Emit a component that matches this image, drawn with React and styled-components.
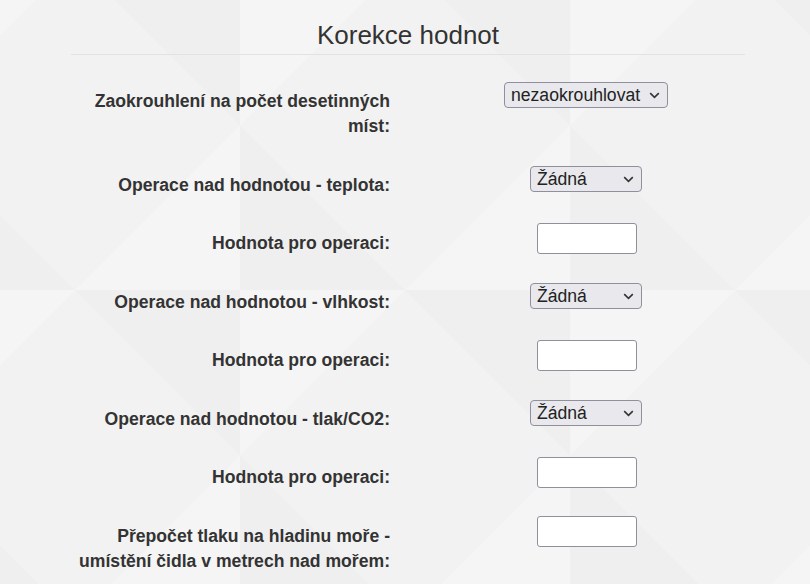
import React from 'react';
import styled, { createGlobalStyle } from 'styled-components';

const GlobalStyle = createGlobalStyle`
  html, body {
    margin: 0;
    padding: 0;
  }
  body {
    min-height: 584px;
    background-color: #f2f2f2;
    background-image:
      linear-gradient(45deg, rgba(0, 0, 0, 0.012) 25%, transparent 25%, transparent 75%, rgba(0, 0, 0, 0.012) 75%),
      linear-gradient(-45deg, rgba(255, 255, 255, 0.22) 25%, transparent 25%, transparent 75%, rgba(255, 255, 255, 0.22) 75%);
    background-size: 330px 330px;
    background-position: -90px -40px;
    font-family: "Liberation Sans", Arial, sans-serif;
    color: #333;
  }
`;

// Outer page area
const Page = styled.div`
  padding: 0 65px 0 71px;
`;

const Title = styled.h2`
  margin: 0;
  padding: 20px 0 4px;
  font-size: 26px;
  font-weight: normal;
  line-height: 30px;
  text-align: center;
  color: #333;
  border-bottom: 1px solid #e2e2e2;
`;

const Form = styled.div`
  margin-top: 27px;
  display: grid;
  grid-template-columns: 319px 1fr;
  align-items: start;
`;

const Label = styled.label`
  padding: 7px 0 26.5px;
  font-size: 17.6px;
  font-weight: bold;
  line-height: 25px;
  text-align: right;
  color: #333;
`;

const Control = styled.div`
  padding-left: ${(p) => (p.$shift ? 39 : 37)}px;
  display: flex;
  justify-content: center;
`;

const SelectWrap = styled.div`
  position: relative;
  width: ${(p) => p.$width}px;

  svg {
    position: absolute;
    right: 8px;
    top: 10px;
    pointer-events: none;
  }
`;

const Select = styled.select`
  appearance: none;
  box-sizing: border-box;
  width: 100%;
  height: 26px;
  padding: 0 22px 0 6px;
  font-family: "Liberation Sans", Arial, sans-serif;
  font-size: 17.6px;
  color: #222;
  background: #e9e9ed;
  border: 1px solid #8f8f9d;
  border-radius: 4px;
`;

const Input = styled.input`
  box-sizing: border-box;
  width: 100px;
  height: 31px;
  margin-top: -1px;
  background: #fff;
  border: 1px solid #8f8f9d;
  border-radius: 3px;
  font-family: "Liberation Sans", Arial, sans-serif;
  font-size: 16px;
`;

const Chevron = () => (
  <svg width="11" height="7" viewBox="0 0 11 7">
    <path d="M1.2 1.2 L5.5 5.3 L9.8 1.2" fill="none" stroke="#333" strokeWidth="1.6" />
  </svg>
);

const Dropdown = ({ width, options }) => (
  <SelectWrap $width={width}>
    <Select defaultValue={options[0]}>
      {options.map((o) => (
        <option key={o}>{o}</option>
      ))}
    </Select>
    <Chevron />
  </SelectWrap>
);

const ops = ['Žádná', 'Přičíst', 'Odečíst', 'Násobit', 'Dělit'];

const App = () => {
  return (
    <Page>
      <GlobalStyle />
      <Title>Korekce hodnot</Title>
      <Form>
        <Label>Zaokrouhlení na počet desetinných míst:</Label>
        <Control>
          <Dropdown width={164} options={['nezaokrouhlovat', '0', '1', '2']} />
        </Control>

        <Label>Operace nad hodnotou - teplota:</Label>
        <Control>
          <Dropdown width={112} options={ops} />
        </Control>

        <Label>Hodnota pro operaci:</Label>
        <Control $shift>
          <Input type="text" />
        </Control>

        <Label>Operace nad hodnotou - vlhkost:</Label>
        <Control>
          <Dropdown width={112} options={ops} />
        </Control>

        <Label>Hodnota pro operaci:</Label>
        <Control $shift>
          <Input type="text" />
        </Control>

        <Label>Operace nad hodnotou - tlak/CO2:</Label>
        <Control>
          <Dropdown width={112} options={ops} />
        </Control>

        <Label>Hodnota pro operaci:</Label>
        <Control $shift>
          <Input type="text" />
        </Control>

        <Label>Přepočet tlaku na hladinu moře - umístění čidla v metrech nad mořem:</Label>
        <Control $shift>
          <Input type="text" />
        </Control>
      </Form>
    </Page>
  );
};

export default App;
